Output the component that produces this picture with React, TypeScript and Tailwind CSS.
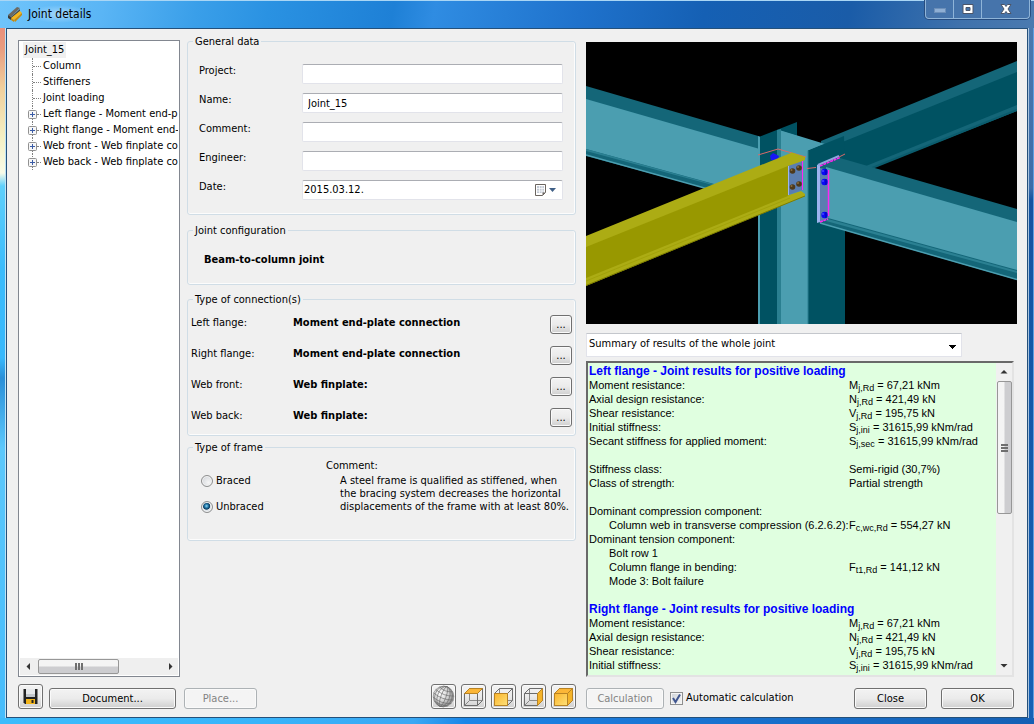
import { Fragment, useState, type ReactNode } from "react";

const BUTTON =
  "flex items-center justify-center rounded-[3px] border border-[#707070] bg-linear-to-b from-[#f3f3f3] from-0% via-[#ebebeb] via-50% to-[#cfcfcf] text-black shadow-[inset_0_0_0_1px_#fafafa] disabled:border-[#adb2b5] disabled:from-[#f4f4f4] disabled:via-[#f4f4f4] disabled:to-[#f4f4f4] disabled:text-[#838383]";

const FIELD =
  "h-5 min-w-0 flex-1 rounded-[2px] border border-[#e2e3ea] border-t-[#abadb3] bg-white";

function Group({ title, className, children }: { title: string; className: string; children: ReactNode }) {
  return (
    <fieldset className={`min-w-0 rounded-[3px] border border-[#d0dde6] shadow-[inset_0_-1px_0_#fcfcfc,inset_-1px_0_0_#fcfcfc] ${className}`}>
      <legend className="ml-[5px] px-[2px] pt-[2px] leading-[12px]">{title}</legend>
      {children}
    </fieldset>
  );
}

function AppIcon() {
  return (
    <svg className="h-4 w-4" viewBox="0 0 16 16">
      <path d="M1 9 10 1l3 1-9 9z" fill="#6d6a62" />
      <path d="M1 9 4 11v3L1 12z" fill="#3c3a36" />
      <path d="M4 11 13 3v2l-9 8z" fill="#4b4943" />
      <path d="M4 12 13 5l2 2-8 7z" fill="#f6b61c" />
      <path d="M4 12l3 2v2l-3-2zM7 14l8-7v2l-7 7z" fill="#c98a08" />
    </svg>
  );
}

function TitleBar() {
  return (
    <header className="flex h-7 items-start justify-between border-t border-[#a9d6f5] bg-[linear-gradient(100deg,#6fc4fb_0%,#5ab5f5_10%,#3a9fe9_19%,#2a92e2_26%,#1e80d6_38%,#2f8ce2_42%,#1f72cc_56%,#1560b4_68%,#1a5ca8_82%,#3f72ac_93%,#4a7ab0_100%)] pl-[7px] pr-1">
      <h1 className="flex h-[26px] items-center gap-[5px] text-[12px] text-black">
        <AppIcon />
        <span className="bg-[radial-gradient(closest-side,#ffffff66,#ffffff00)]">Joint details</span>
      </h1>
      <div className="-mt-px flex h-[19px] rounded-b-[4px] border border-t-0 border-[#8fb4d8] bg-[#4674ab] shadow-[0_0_0_1px_#274d80]">
        <button aria-label="Minimize" className="flex w-7 items-center justify-center border-r border-[#8fb4d8]">
          <svg className="h-3 w-3" viewBox="0 0 12 12">
            <rect x="0.5" y="5.500" width="11" height="4" fill="#8fafd4" stroke="#6c8fb9" />
          </svg>
        </button>
        <button aria-label="Maximize" className="flex w-7 items-center justify-center border-r border-[#8fb4d8]">
          <svg className="h-3 w-3" viewBox="0 0 12 12">
            <path d="M1 1.500h10v9H1zM4 4.500v3h4v-3z" fill="#fff" fillRule="evenodd" stroke="#4c5568" />
          </svg>
        </button>
        <button aria-label="Close window" className="flex w-[47px] items-center justify-center">
          <svg className="h-3 w-3" viewBox="0 0 12 12">
            <path d="M1 1.500h3.500L6 3.500l1.500-2H11L8 6l3 4.500H7.500L6 8.500l-1.500 2H1L4 6z" fill="#fff" stroke="#4c5568" />
          </svg>
        </button>
      </div>
    </header>
  );
}

const LEAVES = ["Column", "Stiffeners", "Joint loading"];
const BRANCHES = [
  "Left flange - Moment end-plate connection",
  "Right flange - Moment end-plate connection",
  "Web front - Web finplate connection",
  "Web back - Web finplate connection",
];

function Tree() {
  return (
    <nav className="mt-1.5 flex w-[162px] shrink-0 flex-col overflow-hidden border border-[#828790] bg-white p-px">
      <ul className="min-h-0 flex-1 overflow-hidden whitespace-nowrap leading-4">
        <li>
          <span className="ml-[3px] inline-block bg-[#f0f0f0] px-[2px]">Joint_15</span>
          <ul>
            {LEAVES.map((name) => (
              <li key={name} className="flex h-4 items-center">
                <span className="ml-3 h-4 w-0 shrink-0 border-l border-dotted border-[#808080]" />
                <span className="mr-[2px] w-2 shrink-0 border-t border-dotted border-[#808080]" />
                {name}
              </li>
            ))}
            {BRANCHES.map((name) => (
              <li key={name} className="flex h-4 items-center">
                <button aria-label={`Expand ${name}`} className="ml-2 shrink-0">
                  <svg className="h-4 w-[9px]" viewBox="0 0 9 16">
                    <path d="M4.500 0v4M4.500 13v3" stroke="#808080" strokeDasharray="1 1" />
                    <rect x="0.500" y="4.500" width="8" height="8" rx="1" fill="#f6f6f6" stroke="#919191" />
                    <path d="M2 8.500h5M4.500 6v5" stroke="#3a5ba5" />
                  </svg>
                </button>
                <span className="mr-[2px] w-1 shrink-0 border-t border-dotted border-[#808080]" />
                {name}
              </li>
            ))}
          </ul>
        </li>
      </ul>
      <div className="flex h-[17px] shrink-0 items-center bg-[#efefef]">
        <svg className="h-[17px] w-[18px]" viewBox="0 0 18 17">
          <path d="M10 5v7L6.500 8.500z" fill="#333" />
        </svg>
        <div className="flex h-[15px] w-[81px] items-center justify-center gap-px rounded-[2px] border border-[#979797] bg-linear-to-b from-[#f4f4f4] from-45% to-[#cdcdd0] to-55%">
          <span className="h-[7px] w-[2px] bg-[#6f6f6f]" />
          <span className="h-[7px] w-[2px] bg-[#6f6f6f]" />
          <span className="h-[7px] w-[2px] bg-[#6f6f6f]" />
        </div>
        <svg className="ml-auto h-[17px] w-[18px]" viewBox="0 0 18 17">
          <path d="M9 5v7l3.500-3.500z" fill="#333" />
        </svg>
      </div>
    </nav>
  );
}

function TextRow({ label, id, value }: { label: string; id: string; value?: string }) {
  return (
    <div className="flex items-start">
      <label htmlFor={id} className="w-[103px] leading-[14px]">{label}</label>
      <input id={id} type="text" defaultValue={value} className={`${FIELD} px-[5px]`} />
    </div>
  );
}

const CONNECTIONS = [
  ["Left flange:", "Moment end-plate connection"],
  ["Right flange:", "Moment end-plate connection"],
  ["Web front:", "Web finplate:"],
  ["Web back:", "Web finplate:"],
];

const RADIO =
  "h-3 w-3 appearance-none rounded-full border border-[#8e8f8f] bg-[radial-gradient(circle_at_65%_65%,#f6f6f6,#cbcfd5)] shadow-[inset_0_0_0_1px_#f4f4f4] checked:bg-[radial-gradient(circle_at_45%_40%,#8fd8f4_0,#1b6f9f_25%,#0d3a5c_40%,#dde3e8_50%)]";

function Settings() {
  const [frame, setFrame] = useState("Unbraced");
  return (
    <div className="flex w-[389px] shrink-0 flex-col">
      <Group title="General data" className="h-[181px]">
        <div className="flex flex-col gap-[9px] pl-[11px] pr-3 pt-4">
          <TextRow id="project" label="Project:" />
          <TextRow id="name" label="Name:" value="Joint_15" />
          <TextRow id="comment" label="Comment:" />
          <TextRow id="engineer" label="Engineer:" />
          <div className="flex items-start">
            <label htmlFor="date" className="w-[103px] leading-[14px]">Date:</label>
            <div className={`${FIELD} flex items-center`}>
              <input id="date" type="text" defaultValue="2015.03.12." className="min-w-0 flex-1 px-px" />
              <button aria-label="Open calendar" className="flex items-center gap-[2px] pr-[6px]">
                <svg className="h-3 w-3" viewBox="0 0 12 12">
                  <path d="M.5.5h10v8l-3 3h-7z" fill="#fff" stroke="#6b6560" />
                  <path d="M2 2h7v7H2z" fill="#c3cad5" />
                  <path d="M2 4.500h7M2 7h7M4.500 2v7M7 2v7" stroke="#fff" strokeWidth=".7" />
                  <path d="M10.500 8.500h-3v3z" fill="#6b6560" />
                </svg>
                <svg className="h-1 w-[7px]" viewBox="0 0 7 4">
                  <path d="M0 0h7L3.500 4z" fill="#3f5f86" />
                </svg>
              </button>
            </div>
          </div>
        </div>
      </Group>

      <Group title="Joint configuration" className="mt-2 h-[62px]">
        <p className="pl-4 pt-4 font-bold leading-[14px]">Beam-to-column joint</p>
      </Group>

      <Group title="Type of connection(s)" className="mt-[7px] h-[144px]">
        {CONNECTIONS.map(([place, kind]) => (
          <div key={place} className="flex h-[31px] items-start pl-[3px] pr-[3px] leading-[14px]">
            <span className="w-[102px] pt-[10px]">{place}</span>
            <span className="flex-1 pt-[10px] font-bold">{kind}</span>
            <button aria-label={`Edit ${place}`} className={`${BUTTON} mt-[9px] h-[19px] w-[22px]`}>...</button>
          </div>
        ))}
      </Group>

      <Group title="Type of frame" className="mt-1 h-[101px]">
        <div className="flex">
          <div className="flex w-[125px] flex-col gap-3 pl-[13px] pt-5">
            {["Braced", "Unbraced"].map((name) => (
              <label key={name} className="flex items-center gap-[3px] leading-[14px]">
                <input type="radio" name="frame" className={RADIO} checked={frame === name} onChange={() => setFrame(name)} />
                {name}
              </label>
            ))}
          </div>
          <div className="whitespace-nowrap pl-[13px] pt-[5px]">
            <p className="leading-[14px]">Comment:</p>
            <p className="pl-[14px] pt-px leading-[13px]">
              A steel frame is qualified as stiffened, when
              <br />
              the bracing system decreases the horizontal
              <br />
              displacements of the frame with at least 80%.
            </p>
          </div>
        </div>
      </Group>
    </div>
  );
}

function JointView() {
  return (
    <svg className="h-[282px] w-full shrink-0 bg-black" viewBox="586 42 431 282" preserveAspectRatio="xMidYMid slice">
      {/* left beam */}
      <path d="M586 86 760 136.500V203L586 156z" fill="#146678" />
      <path d="M586 99 758 148.500V196L586 149z" fill="#4b9eb0" />
      <path d="M586 149 720 186v1L586 151z" fill="#2b8092" />
      <path d="M586 155 708 189" stroke="#4b9eb0" strokeWidth="1.500" />
      {/* right rear beam */}
      <path d="M821 141 1017 61v50L870 169l-48-5z" fill="#146678" />
      <path d="M830 147 1017 72v33L866 166l-30-4z" fill="#005262" />
      <path d="M1017 110 872 168" stroke="#0b5c6d" strokeWidth="2" />
      {/* column */}
      <path d="M760 136.500 797 122v25l-18 6v171h-19z" fill="#005262" />
      <path d="M777 130l4-1v195h-4z" fill="#2a7f90" />
      <path d="M781 130.500 825 144l-17 7v173h-27z" fill="#4b9eb0" />
      <path d="M781 130l16-7v12z" fill="#005262" />
      <path d="M758 136l2 1v187h-2z" fill="#4b9eb0" />
      <path d="M808 150.500 824 144l20-8 1 26v162h-37z" fill="#005262" />
      <path d="M808 150.500v173.500" stroke="#2a7f90" />
      {/* right front beam */}
      <path d="M820 166l20-8 177 51v71L819 223z" fill="#146678" />
      <path d="M826 167 1017 222v48L828 218z" fill="#4b9eb0" />
      <path d="M828 219 1017 271v2L826 221z" fill="#2b8092" />
      <path d="M820 223 1017 279.500" stroke="#4b9eb0" strokeWidth="1.500" />
      <path d="M820 168l9 2v48l-9 4z" fill="#5b7eb0" />
      <path d="M817 165l3-1v58l-3 1z" fill="#9cb4ee" />
      <path d="M818 165l21-9" stroke="#8fa5dc" strokeWidth="2" />
      <path d="M820 166l20-8.500M820 222l8-3" stroke="#ff25f5" strokeWidth="1.500" strokeDasharray="3 .7" />
      <path d="M828.500 170v46" stroke="#ff25f5" strokeWidth="1.500" />
      {[172, 182, 215].map((y) => (
        <Fragment key={y}>
          <circle cx="824.500" cy={y} r="3.200" fill="#0a0af5" />
          <path d={`M826 ${y - 3}v6`} stroke="#0000a8" />
          <circle cx="823" cy={y - 1} r="1" fill="#4747ff" />
        </Fragment>
      ))}
      {/* section lines */}
      <path d="M758 155 778 149 806 157M807 168.500l9-1M839 157l6-3" fill="none" stroke="#d86a6a" />
      <path d="M770 156l3-3 6 3-2 5-6-1z" fill="#1717f5" />
      {/* front beam */}
      <path d="M586 236 792 152.500l13 4.500v3l-16 7v28l12-4 4 3v2L586 286z" fill="#acac14" />
      <path d="M586 247 788 166v30L586 278z" fill="#989800" />
      <path d="M586 285.500 805 196" stroke="#7d7d00" />
      <path d="M586 281 790 198" stroke="#a2a20a" />
      <path d="M788 166l15-5v29l-15 5z" fill="#5b7eb0" />
      <path d="M788.500 166v29" stroke="#9cb4ee" />
      <path d="M802.500 161v29" stroke="#ff25f5" />
      {[[792.5, 171], [799, 168], [792.5, 187], [799, 184]].map(([x, y]) => (
        <Fragment key={`${x}-${y}`}>
          <circle cx={x} cy={y} r="2.800" fill="#4d391b" />
          <circle cx={x - 1} cy={y - 1} r="1" fill="#8a6d3e" />
        </Fragment>
      ))}
    </svg>
  );
}

type Row = { label?: string; indent?: boolean; heading?: boolean; symbol?: string; sub?: string; value?: string };

const RESISTANCES: Row[] = [
  { label: "Moment resistance:", symbol: "M", sub: "j,Rd", value: "= 67,21 kNm" },
  { label: "Axial design resistance:", symbol: "N", sub: "j,Rd", value: "= 421,49 kN" },
  { label: "Shear resistance:", symbol: "V", sub: "j,Rd", value: "= 195,75 kN" },
  { label: "Initial stiffness:", symbol: "S", sub: "j,ini", value: "= 31615,99 kNm/rad" },
];

const ROWS: Row[] = [
  { label: "Left flange - Joint results for positive loading", heading: true },
  ...RESISTANCES,
  { label: "Secant stiffness for applied moment:", symbol: "S", sub: "j,sec", value: "= 31615,99 kNm/rad" },
  {},
  { label: "Stiffness class:", value: "Semi-rigid (30,7%)" },
  { label: "Class of strength:", value: "Partial strength" },
  {},
  { label: "Dominant compression component:" },
  { label: "Column web in transverse compression (6.2.6.2):", indent: true, symbol: "F", sub: "c,wc,Rd", value: "= 554,27 kN" },
  { label: "Dominant tension component:" },
  { label: "Bolt row 1", indent: true },
  { label: "Column flange in bending:", indent: true, symbol: "F", sub: "t1,Rd", value: "= 141,12 kN" },
  { label: "Mode 3: Bolt failure", indent: true },
  {},
  { label: "Right flange - Joint results for positive loading", heading: true },
  ...RESISTANCES,
];

function Results() {
  return (
    <div className="mr-[3px] mt-1 flex min-h-0 flex-1 border-2 border-[#e3e3e3] border-l-[#696969] border-t-[#696969] bg-[#e0ffe0]">
      <div className="min-w-0 flex-1 overflow-hidden pl-px pt-px font-['Liberation_Sans',sans-serif] text-[11px] leading-[14px]">
        <table className="w-full table-fixed border-collapse whitespace-nowrap">
          <colgroup>
            <col className="w-[260px]" />
            <col />
          </colgroup>
          <tbody>
            {ROWS.map((row, i) =>
              row.heading ? (
                <tr key={i} className="h-[14px]">
                  <th colSpan={2} className="p-0 text-left text-[12px] font-bold leading-[14px] text-[#0000ff]">{row.label}</th>
                </tr>
              ) : (
                <tr key={i} className="h-[14px]">
                  <td className={row.indent ? "p-0 pl-5" : "p-0"}>{row.label}</td>
                  <td className="p-0">
                    {row.symbol}
                    {row.sub && <sub className="-bottom-0.5 text-[9px]">{row.sub}</sub>} {row.value}
                  </td>
                </tr>
              ),
            )}
          </tbody>
        </table>
      </div>
      <div className="flex w-4 shrink-0 flex-col items-center bg-[#f0f0f0]">
        <svg className="h-[18px] w-4 shrink-0" viewBox="0 0 16 18">
          <path d="M4.500 10.500h7L8 7z" fill="#333" />
        </svg>
        <div className="flex h-[133px] w-[15px] flex-col items-center justify-center gap-px rounded-[2px] border border-[#979797] bg-linear-to-r from-[#f4f4f4] from-45% to-[#cdcdd0] to-55%">
          <span className="h-[2px] w-[7px] bg-[#6f6f6f]" />
          <span className="h-[2px] w-[7px] bg-[#6f6f6f]" />
          <span className="h-[2px] w-[7px] bg-[#6f6f6f]" />
        </div>
        <svg className="mt-auto h-[18px] w-4 shrink-0" viewBox="0 0 16 18">
          <path d="M4.500 7h7L8 10.500z" fill="#333" />
        </svg>
      </div>
    </div>
  );
}

function SaveIcon() {
  return (
    <svg className="h-[15px] w-[15px]" viewBox="0 0 15 15">
      <path d="M.5 0h14v15H2L.5 13.500z" fill="#222" />
      <path d="M3 0h9v8H3z" fill="#e6e8ea" />
      <path d="M3 5h9v3H3z" fill="#c3c7cb" />
      <path d="M3 10h9v5H3z" fill="#f2b51c" />
      <path d="M8.500 11h2v3h-2z" fill="#222" />
    </svg>
  );
}

function SphereIcon() {
  return (
    <svg className="h-[23px] w-[23px]" viewBox="0 0 23 23">
      <defs>
        <radialGradient id="sphere" cx=".35" cy=".35" r=".8">
          <stop offset="0" stopColor="#ffffff" />
          <stop offset=".5" stopColor="#d0d0d0" />
          <stop offset="1" stopColor="#707070" />
        </radialGradient>
      </defs>
      <circle cx="11.500" cy="11.500" r="10.300" fill="url(#sphere)" stroke="#888" strokeWidth=".7" />
      <g fill="none" stroke="#6a6a6a" strokeWidth=".6" transform="rotate(20 11.500 11.500)">
        <ellipse cx="11.500" cy="11.500" rx="2.500" ry="10.500" />
        <ellipse cx="11.500" cy="11.500" rx="6" ry="10.500" />
        <ellipse cx="11.500" cy="11.500" rx="8.700" ry="10.500" />
        <path d="M1 11.500q10.500 4 21 0M1.800 7.500q9.700 4 19.400 0M4.500 4q7 3 14 0M1.800 15.500q9.700 4 19.400 0M4.500 19q7 2 14 0" />
      </g>
    </svg>
  );
}

type Face = "top" | "front" | "right";

const FACES: Record<Face, { d: string; fill: string }> = {
  top: { d: "M2.500 8.500l5-5h13l-5 5z", fill: "#fbb637" },
  front: { d: "M2.500 8.500h13v12h-13z", fill: "url(#cube-front)" },
  right: { d: "M15.500 8.500l5-5v12l-5 5z", fill: "#f5b42a" },
};

function CubeIcon({ faces }: { faces: Face[] }) {
  return (
    <svg className="h-[23px] w-[23px]" viewBox="0 0 23 23">
      <defs>
        <linearGradient id="cube-front" x2="1" y2="1">
          <stop offset="0" stopColor="#fbb52c" />
          <stop offset="1" stopColor="#fde17a" />
        </linearGradient>
      </defs>
      <path d="M7.500 3.500v12h13M7.500 15.500l-5 5" fill="none" stroke="#8a8a8a" />
      <path d="M2.500 8.500h13v12h-13zM2.500 8.500l5-5h13l-5 5M20.500 3.500v12l-5 5" fill="none" stroke="#6c6c6c" strokeLinejoin="round" />
      {faces.map((face) => (
        <path key={face} d={FACES[face].d} fill={FACES[face].fill} stroke="#b98324" strokeLinejoin="round" />
      ))}
    </svg>
  );
}

const ICON_BUTTON = `${BUTTON} h-[25px] w-[25px]`;

function Footer() {
  return (
    <footer className="mt-[7px] flex h-[25px] shrink-0">
      <div className="flex w-[413px]">
        <button aria-label="Save" className={ICON_BUTTON}><SaveIcon /></button>
        <button className={`${BUTTON} ml-[6px] mt-1 h-[21px] w-[127px] pt-px`}>Document...</button>
        <button disabled className={`${BUTTON} ml-2 mt-1 h-[21px] w-[73px] pt-px`}>Place...</button>
      </div>
      <div className="flex w-[155px] gap-[5px]">
        <button aria-label="Rotate view" className={ICON_BUTTON}><SphereIcon /></button>
        <button aria-label="Top view" className={ICON_BUTTON}><CubeIcon faces={["top"]} /></button>
        <button aria-label="Front view" className={ICON_BUTTON}><CubeIcon faces={["front"]} /></button>
        <button aria-label="Side view" className={ICON_BUTTON}><CubeIcon faces={["right"]} /></button>
        <button aria-label="Perspective view" className={ICON_BUTTON}><CubeIcon faces={["top", "front", "right"]} /></button>
      </div>
      <div className="mt-1 flex h-[21px] flex-1 items-center pr-[3px]">
        <button disabled className={`${BUTTON} h-full w-[78px] pt-px`}>Calculation</button>
        <label className="ml-[6px] flex items-center gap-[3px]">
          <span className="grid">
            <input type="checkbox" defaultChecked className="peer col-start-1 row-start-1 h-[13px] w-[13px] appearance-none border border-[#8e8f8f] bg-linear-to-br from-[#cfd3d8] to-[#f6f6f6] shadow-[inset_0_0_0_1px_#f4f4f4]" />
            <svg className="pointer-events-none invisible col-start-1 row-start-1 h-[13px] w-[13px] peer-checked:visible" viewBox="0 0 13 13">
              <path d="M3 6l2.500 4L10 2.500" fill="none" stroke="#40568f" strokeWidth="2" />
            </svg>
          </span>
          Automatic calculation
        </label>
        <button className={`${BUTTON} ml-auto h-full w-[73px] pt-px`}>Close</button>
        <button className={`${BUTTON} ml-[14px] h-full w-[73px] pt-px`}>OK</button>
      </div>
    </footer>
  );
}

export default function App() {
  return (
    <div className="flex h-screen flex-col bg-[#1d3b5c] font-['DejaVu_Sans_Condensed','DejaVu_Sans',sans-serif] text-[11px] text-black">
      <TitleBar />
      <div className="flex min-h-0 flex-1">
        <div className="w-[6px] border-r border-[#bfe3f5] bg-[linear-gradient(#e8907c_0px,#e89c80_20px,#f0cf9c_60px,#f4f0c4_110px,#f8fbe8_145px,#5fd0fc_158px,#3cbcfc_240px,#38b8fc_330px,#2a8fd8_350px,#5cc8fc_420px,#45bcfc_100%)]" />
        <main className="flex min-w-0 flex-1 flex-col border border-[#24507a] bg-[#f0f0f0] pb-2 pl-[11px] pr-[10px] pt-[5px]">
          <div className="flex min-h-0 flex-1">
            <Tree />
            <div className="ml-[7px] flex"><Settings /></div>
            <section className="ml-[10px] flex min-w-0 flex-1 flex-col pt-2">
              <JointView />
              <select aria-label="Result set" className="mr-[55px] mt-[9px] h-6 shrink-0 appearance-none border border-[#e2e3ea] border-t-[#c4c7cc] bg-white bg-[linear-gradient(to_bottom_right,#000_50%,transparent_50%),linear-gradient(to_bottom_left,#000_50%,transparent_50%)] bg-[length:4px_4px] bg-[position:right_4px_top_11px,right_8px_top_11px] bg-no-repeat pb-px pl-[2px]">
                <option>Summary of results of the whole joint</option>
              </select>
              <Results />
            </section>
          </div>
          <Footer />
        </main>
        <div className="w-[6px] border-x border-l-[#a8c4e0] border-r-[#5f9fe0] bg-[linear-gradient(#4a78ae_0px,#3c6ca8_160px,#1453a0_172px,#1560b4_100%)]" />
      </div>
      <div className="h-[6px] shrink-0 bg-[linear-gradient(90deg,#3cbcfc_0%,#38b4fa_25%,#3aa8f4_40%,#1a86e8_45%,#1a78d8_60%,#1560b4_100%)]" />
    </div>
  );
}
